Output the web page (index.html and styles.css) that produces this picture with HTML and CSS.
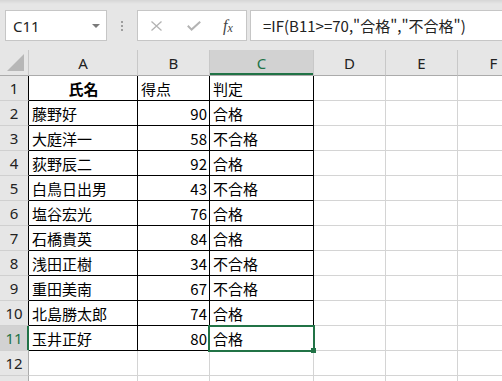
FILE: index.html
```html
<!DOCTYPE html>
<html lang="ja">
<head>
<meta charset="utf-8">
<link rel="stylesheet" href="styles.css">
</head>
<body>
<div class="fbar">
  <div class="namebox"><span>C11</span><span class="caret"></span></div>
  <div class="grip"><i></i><i></i><i></i></div>
  <div class="fbtns">
    <svg class="ic-x" width="11" height="10" viewBox="0 0 11 10"><path d="M0.5 0.5 L10.5 9.5 M10.5 0.5 L0.5 9.5" stroke="#b3b3b3" stroke-width="1.3" fill="none"/></svg>
    <svg class="ic-ok" width="14" height="10" viewBox="0 0 14 10"><path d="M0.8 4.8 L4.6 8.6 L13.2 0.8" stroke="#b3b3b3" stroke-width="2" fill="none"/></svg>
    <span class="fx">f<span class="fxx">x</span></span>
  </div>
  <div class="finput">=IF(B11&gt;=70,"合格","不合格")</div>
</div>
<div class="sheet">
  <div class="cell corner"><svg width="18" height="18" viewBox="0 0 18 18"><path d="M17 0 L17 17 L0 17 Z" fill="#b7b7b7"/></svg></div>
  <div class="cell ch">A</div>
  <div class="cell ch">B</div>
  <div class="cell ch csel">C</div>
  <div class="cell ch">D</div>
  <div class="cell ch">E</div>
  <div class="cell ch">F</div>

  <div class="cell rh blk">1</div>
  <div class="cell b bold ctr">氏名</div>
  <div class="cell b">得点</div>
  <div class="cell b">判定</div>
  <div class="cell"></div><div class="cell"></div><div class="cell"></div>

  <div class="cell rh blk">2</div>
  <div class="cell b">藤野好</div>
  <div class="cell b num">90</div>
  <div class="cell b">合格</div>
  <div class="cell"></div><div class="cell"></div><div class="cell"></div>

  <div class="cell rh blk">3</div>
  <div class="cell b">大庭洋一</div>
  <div class="cell b num">58</div>
  <div class="cell b">不合格</div>
  <div class="cell"></div><div class="cell"></div><div class="cell"></div>

  <div class="cell rh blk">4</div>
  <div class="cell b">荻野辰二</div>
  <div class="cell b num">92</div>
  <div class="cell b">合格</div>
  <div class="cell"></div><div class="cell"></div><div class="cell"></div>

  <div class="cell rh blk">5</div>
  <div class="cell b">白鳥日出男</div>
  <div class="cell b num">43</div>
  <div class="cell b">不合格</div>
  <div class="cell"></div><div class="cell"></div><div class="cell"></div>

  <div class="cell rh blk">6</div>
  <div class="cell b">塩谷宏光</div>
  <div class="cell b num">76</div>
  <div class="cell b">合格</div>
  <div class="cell"></div><div class="cell"></div><div class="cell"></div>

  <div class="cell rh blk">7</div>
  <div class="cell b">石橋貴英</div>
  <div class="cell b num">84</div>
  <div class="cell b">合格</div>
  <div class="cell"></div><div class="cell"></div><div class="cell"></div>

  <div class="cell rh blk">8</div>
  <div class="cell b">浅田正樹</div>
  <div class="cell b num">34</div>
  <div class="cell b">不合格</div>
  <div class="cell"></div><div class="cell"></div><div class="cell"></div>

  <div class="cell rh blk">9</div>
  <div class="cell b">重田美南</div>
  <div class="cell b num">67</div>
  <div class="cell b">不合格</div>
  <div class="cell"></div><div class="cell"></div><div class="cell"></div>

  <div class="cell rh blk">10</div>
  <div class="cell b">北島勝太郎</div>
  <div class="cell b num">74</div>
  <div class="cell b">合格</div>
  <div class="cell"></div><div class="cell"></div><div class="cell"></div>

  <div class="cell rh rsel">11</div>
  <div class="cell b">玉井正好</div>
  <div class="cell b num">80</div>
  <div class="cell b sel">合格</div>
  <div class="cell"></div><div class="cell"></div><div class="cell"></div>

  <div class="cell rh">12</div>
  <div class="cell"></div><div class="cell"></div><div class="cell"></div>
  <div class="cell"></div><div class="cell"></div><div class="cell"></div>

  <div class="cell rh"></div>
  <div class="cell"></div><div class="cell"></div><div class="cell"></div>
  <div class="cell"></div><div class="cell"></div><div class="cell"></div>
</div>
</body>
</html>
```
FILE: styles.css
```css
html, body {
  margin: 0;
  padding: 0;
  width: 502px;
  height: 381px;
  overflow: hidden;
  background: #ffffff;
  font-family: "Noto Sans CJK JP", "Noto Sans", sans-serif;
  color: #000;
}

.fbar {
  height: 50px;
  box-sizing: border-box;
  padding-top: 10px;
  display: flex;
  align-items: flex-start;
  background: linear-gradient(#d6d6d6 0, #e6e6e6 4px);
}

.namebox {
  margin-left: 5px;
  width: 102px;
  height: 31px;
  box-sizing: border-box;
  border: 1px solid #c6c6c6;
  background: #fff;
  display: flex;
  align-items: center;
  padding-left: 7px;
  font-family: "Noto Sans", sans-serif;
  font-size: 15px;
  color: #222;
}

.caret {
  margin-left: auto;
  margin-right: 6px;
  width: 0;
  height: 0;
  border-left: 4px solid transparent;
  border-right: 4px solid transparent;
  border-top: 4px solid #7a7a7a;
}

.grip {
  width: 30px;
  height: 31px;
  display: flex;
  flex-direction: column;
  align-items: center;
  justify-content: center;
  gap: 2px;
}

.grip i {
  display: block;
  width: 2px;
  height: 2px;
  background: #9e9e9e;
}

.fbtns {
  width: 110px;
  height: 31px;
  box-sizing: border-box;
  border: 1px solid #c6c6c6;
  background: #fff;
  display: flex;
  align-items: center;
  padding-left: 13px;
}

.ic-x { margin-top: 1px; }
.ic-ok { margin-left: 25px; margin-top: 1px; }

.fx {
  margin-left: 22px;
  font-family: "Liberation Serif", serif;
  font-style: italic;
  font-size: 16px;
  color: #444;
  line-height: 1;
}

.fxx {
  font-size: 12px;
  position: relative;
  top: 1px;
}

.finput {
  margin-left: 3px;
  margin-right: -20px;
  flex: 1;
  height: 31px;
  box-sizing: border-box;
  border: 1px solid #c6c6c6;
  background: #fff;
  display: flex;
  align-items: center;
  padding-left: 12px;
  font-size: 15px;
  color: #222;
  white-space: nowrap;
}

.sheet {
  display: grid;
  grid-template-columns: 29px 109px 72px 104px 72px 72px 72px;
  grid-template-rows: 26px;
  grid-auto-rows: 25px;
  width: 530px;
}

.cell {
  box-sizing: border-box;
  border-right: 1px solid #d4d4d4;
  border-bottom: 1px solid #d4d4d4;
  display: flex;
  align-items: center;
  padding: 0 2px 0 3px;
  font-size: 15px;
  white-space: nowrap;
  min-width: 0;
}

.corner {
  background: #e6e6e6;
  border-right-color: #c8c8c8;
  border-bottom-color: #ababab;
  padding: 0;
  align-items: flex-end;
  justify-content: flex-end;
}

.corner svg { margin: 0 3px 3px 0; }

.ch {
  background: #e6e6e6;
  border-right-color: #c8c8c8;
  border-bottom-color: #ababab;
  justify-content: center;
  font-family: "Noto Sans", sans-serif;
  font-size: 15px;
  color: #222;
  padding: 0;
}

.csel {
  background: #d2d2d2;
  color: #217346;
  box-shadow: inset 0 -2px 0 #217346;
}

.rh {
  background: #e6e6e6;
  border-right-color: #ababab;
  border-bottom-color: #d0d0d0;
  justify-content: center;
  font-family: "Noto Sans", sans-serif;
  font-size: 15px;
  color: #222;
  padding: 0;
}

.rh.blk { border-right-color: #000; }

.rsel {
  background: #d2d2d2;
  color: #217346;
  border-right-color: #217346;
  box-shadow: inset -1px 0 0 #217346;
}

.b {
  border-right-color: #000;
  border-bottom-color: #000;
}

.bold { font-weight: bold; }
.ctr { justify-content: center; }
.num { justify-content: flex-end; }

.sel { position: relative; }

.sel::after {
  content: "";
  position: absolute;
  top: -1px;
  left: -2px;
  right: -2px;
  bottom: -2px;
  border: 2px solid #217346;
}

.sel::before {
  content: "";
  position: absolute;
  width: 5px;
  height: 5px;
  right: -3px;
  bottom: -3px;
  background: #217346;
  z-index: 1;
}
```
